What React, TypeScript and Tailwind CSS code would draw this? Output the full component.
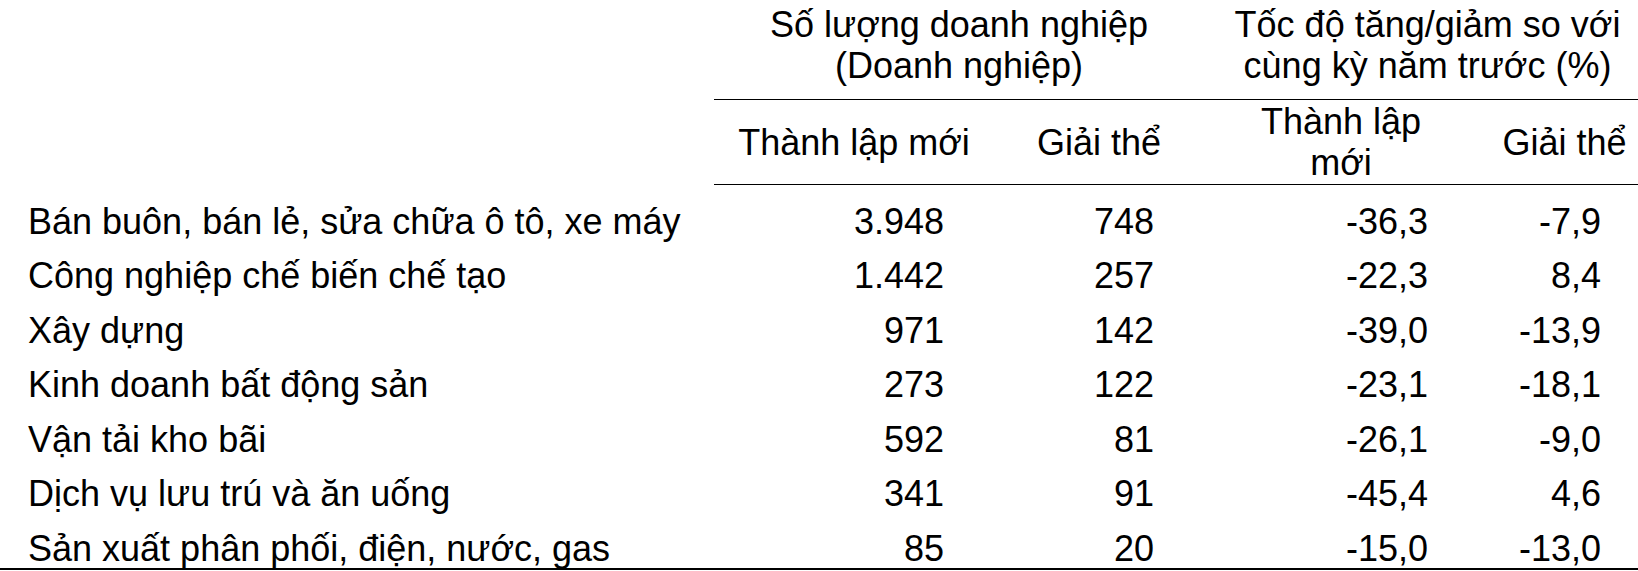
import React from "react";

const rows: [string, string, string, string, string][] = [
  ["Bán buôn, bán lẻ, sửa chữa ô tô, xe máy", "3.948", "748", "-36,3", "-7,9"],
  ["Công nghiệp chế biến chế tạo", "1.442", "257", "-22,3", "8,4"],
  ["Xây dựng", "971", "142", "-39,0", "-13,9"],
  ["Kinh doanh bất động sản", "273", "122", "-23,1", "-18,1"],
  ["Vận tải kho bãi", "592", "81", "-26,1", "-9,0"],
  ["Dịch vụ lưu trú và ăn uống", "341", "91", "-45,4", "4,6"],
  ["Sản xuất phân phối, điện, nước, gas", "85", "20", "-15,0", "-13,0"],
];

export default function App() {
  return (
    <div className="w-[1638px] h-[571px] overflow-hidden bg-white">
      <div className="w-[1651px] font-['Liberation_Sans',Arial,sans-serif] text-[36px] text-black">
        {/* Header row 1 */}
        <div className="grid grid-cols-[714px_490px_447px] h-[99px] pt-[4px] leading-[41px]">
          <div />
          <div className="text-center">
            Số lượng doanh nghiệp
            <br />
            (Doanh nghiệp)
          </div>
          <div className="text-center">
            Tốc độ tăng/giảm so với
            <br />
            cùng kỳ năm trước (%)
          </div>
        </div>
        <div className="ml-[714px] h-[1px] bg-black" />
        {/* Header row 2 */}
        <div className="grid grid-cols-[714px_280px_210px_274px_173px] h-[84px] items-center leading-[41px]">
          <div />
          <div className="text-center">Thành lập mới</div>
          <div className="text-center">Giải thể</div>
          <div className="text-center">
            Thành lập
            <br />
            mới
          </div>
          <div className="text-center">Giải thể</div>
        </div>
        <div className="ml-[714px] h-[1px] bg-black" />
        {/* Body */}
        <div className="flex flex-col gap-[20.5px] pt-[19.5px] pb-[2.5px] leading-[34px] border-b-2 border-black">
          {rows.map((r) => (
            <div
              key={r[0]}
              className="grid grid-cols-[714px_280px_210px_274px_173px] h-[34px]"
            >
              <div className="pl-[28px] whitespace-nowrap">{r[0]}</div>
              <div className="text-right pr-[50px]">{r[1]}</div>
              <div className="text-right pr-[50px]">{r[2]}</div>
              <div className="text-right pr-[50px]">{r[3]}</div>
              <div className="text-right pr-[50px]">{r[4]}</div>
            </div>
          ))}
        </div>
      </div>
    </div>
  );
}
